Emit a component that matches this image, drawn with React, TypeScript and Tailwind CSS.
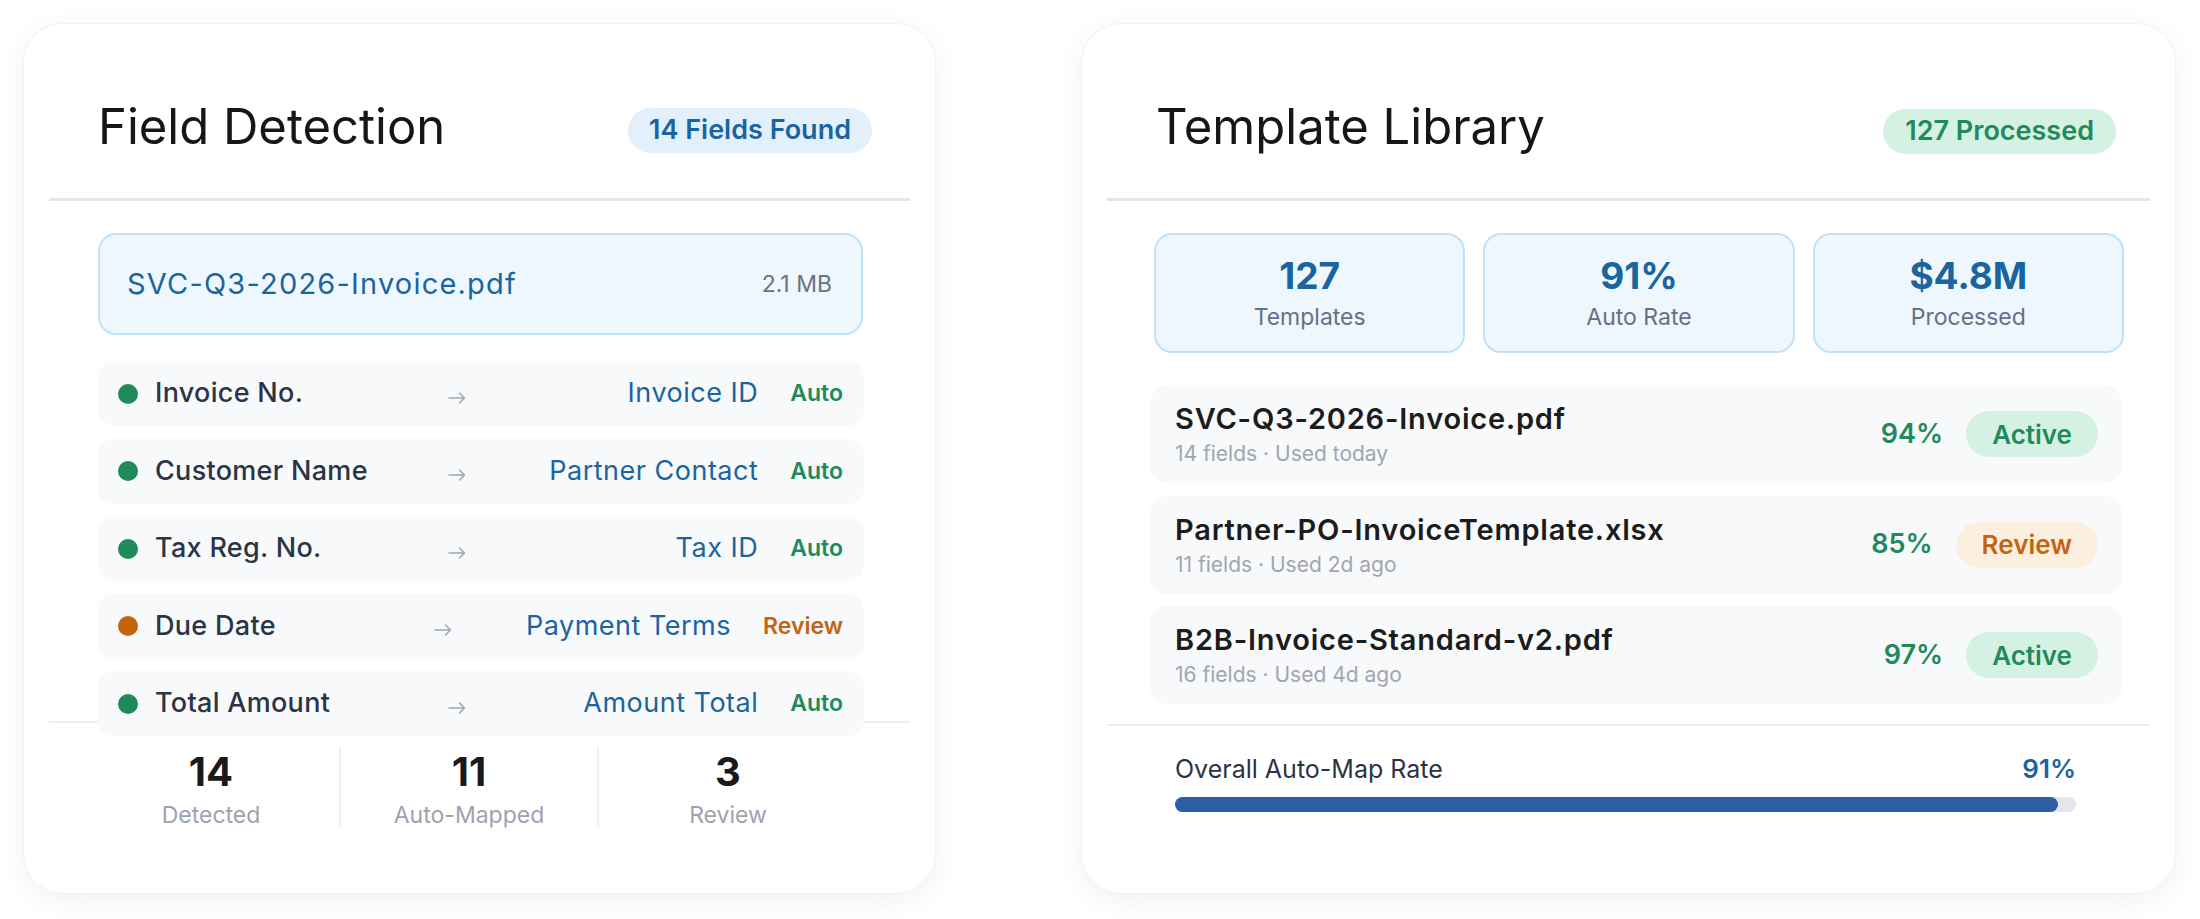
import React from 'react';

type Mapping = {
  label: string;
  target: string;
  status: 'Auto' | 'Review';
};

const mappings: Mapping[] = [
  { label: 'Invoice No.', target: 'Invoice ID', status: 'Auto' },
  { label: 'Customer Name', target: 'Partner Contact', status: 'Auto' },
  { label: 'Tax Reg. No.', target: 'Tax ID', status: 'Auto' },
  { label: 'Due Date', target: 'Payment Terms', status: 'Review' },
  { label: 'Total Amount', target: 'Amount Total', status: 'Auto' },
];

const templates = [
  { name: 'SVC-Q3-2026-Invoice.pdf', meta: '14 fields · Used today', rate: '94%', state: 'Active' },
  { name: 'Partner-PO-InvoiceTemplate.xlsx', meta: '11 fields · Used 2d ago', rate: '85%', state: 'Review' },
  { name: 'B2B-Invoice-Standard-v2.pdf', meta: '16 fields · Used 4d ago', rate: '97%', state: 'Active' },
];

function Arrow() {
  return (
    <svg width="18" height="14" viewBox="0 0 18 14" fill="none" className="shrink-0 translate-y-[4px]">
      <path d="M1 7h15.5M11.5 2l5 5-5 5" stroke="#a0a6b2" strokeWidth="1.5" strokeLinecap="round" strokeLinejoin="round" />
    </svg>
  );
}

function FieldDetection() {
  return (
    <div className="w-[913px] h-[871px] shrink-0 rounded-[40px] bg-white border border-[#f1f2f3] shadow-[0_6px_28px_rgba(0,0,0,0.06)]">
      <div className="flex justify-between items-start h-[174px] pl-[74px] pr-[63px]">
        <h2 className="mt-[78px] text-[49px] leading-none font-normal text-[#161616]">Field Detection</h2>
        <span className="mt-[84px] h-[45px] px-[21px] flex items-center rounded-full bg-[#e2f0fc] text-[27px] font-semibold text-[#1a64a0]">
          14 Fields Found
        </span>
      </div>
      <div className="mx-[25px] h-[3px] bg-[#e4e5e6]" />

      <div className="ml-[74px] mr-[72px] mt-[32px] h-[102px] rounded-[18px] border-2 border-[#c0e2f8] bg-[#eef7fe] flex items-center justify-between pl-[27px] pr-[29px]">
        <span className="text-[29px] tracking-[1.2px] text-[#1a64a0]">SVC-Q3-2026-Invoice.pdf</span>
        <span className="text-[23px] text-[#6b7280]">2.1 MB</span>
      </div>

      <div className="ml-[74px] mr-[71px] mt-[26px] h-[360px] flex flex-col gap-[12.5px]">
        {mappings.map((m) => (
          <div key={m.label} className="h-[65px] shrink-0 flex items-center rounded-[16px] bg-[#f7f9fb] pl-[20px] pr-[21px]">
            <span className={`w-[20px] h-[20px] rounded-full shrink-0 ${m.status === 'Auto' ? 'bg-[#1f8a5b]' : 'bg-[#c4640f]'}`} />
            <span className="ml-[17px] flex-1 min-w-0 text-[27px] font-medium tracking-[0.3px] text-[#2b3445] whitespace-nowrap">{m.label}</span>
            <Arrow />
            <span className="flex-1 min-w-0 text-right text-[27px] tracking-[0.5px] text-[#1a64a0] whitespace-nowrap">{m.target}</span>
            <span className={`ml-[32px] text-[23px] font-semibold ${m.status === 'Auto' ? 'text-[#1f8a5b]' : 'text-[#c4640f]'}`}>
              {m.status}
            </span>
          </div>
        ))}
      </div>

      <div className="mx-[25px] h-[2px] bg-[#eceef0]" />
      <div className="ml-[59px] w-[774px] mt-[25px] h-[79px] grid grid-cols-3">
        {[
          ['14', 'Detected'],
          ['11', 'Auto-Mapped'],
          ['3', 'Review'],
        ].map(([n, l], i) => (
          <div key={l} className={`flex flex-col items-center pt-[4px] ${i < 2 ? 'border-r-2 border-[#eef0f2]' : ''}`}>
            <span className="text-[40px] leading-none font-bold text-[#1a1a1a]">{n}</span>
            <span className="mt-[12px] text-[23px] leading-none text-[#9ca3af]">{l}</span>
          </div>
        ))}
      </div>
    </div>
  );
}

function TemplateLibrary() {
  return (
    <div className="w-[1095px] h-[871px] shrink-0 rounded-[40px] bg-white border border-[#f1f2f3] shadow-[0_6px_28px_rgba(0,0,0,0.06)]">
      <div className="flex justify-between items-start h-[174px] pl-[74px] pr-[59px]">
        <h2 className="mt-[78px] text-[49px] leading-none font-normal text-[#161616]">Template Library</h2>
        <span className="mt-[85px] h-[45px] px-[22px] flex items-center rounded-full bg-[#d5f1e3] text-[27px] font-semibold text-[#1f8a5b]">
          127 Processed
        </span>
      </div>
      <div className="mx-[25px] h-[3px] bg-[#e4e5e6]" />

      <div className="ml-[72px] mr-[51px] mt-[32px] grid grid-cols-3 gap-[18px]">
        {[
          ['127', 'Templates'],
          ['91%', 'Auto Rate'],
          ['$4.8M', 'Processed'],
        ].map(([n, l]) => (
          <div key={l} className="h-[120px] rounded-[18px] border-2 border-[#c0e2f8] bg-[#eef7fe] flex flex-col items-center justify-center gap-[12px]">
            <span className="text-[37px] leading-none font-bold text-[#1a64a0]">{n}</span>
            <span className="text-[23px] leading-none text-[#667085]">{l}</span>
          </div>
        ))}
      </div>

      <div className="ml-[68px] mr-[53px] mt-[32px] flex flex-col gap-[12.5px]">
        {templates.map((t) => (
          <div key={t.name} className="h-[98px] flex items-center rounded-[18px] bg-[#f7f9fb] pl-[25px] pr-[24px]">
            <div className="flex-1 min-w-0 flex flex-col gap-[10px]">
              <span className="text-[29px] leading-none font-semibold tracking-[0.8px] text-[#1c1c1c]">{t.name}</span>
              <span className="text-[21px] leading-none text-[#a0a6b1]">{t.meta}</span>
            </div>
            <span className="text-[27px] font-semibold text-[#1f8a5b]">{t.rate}</span>
            <span
              className={`ml-[23px] h-[46px] px-[26px] flex items-center rounded-full text-[26px] font-semibold ${
                t.state === 'Active' ? 'bg-[#d5f1e3] text-[#1f8a5b]' : 'bg-[#fdefe0] text-[#c4640f]'
              }`}
            >
              {t.state}
            </span>
          </div>
        ))}
      </div>

      <div className="mx-[25px] mt-[20px] h-[2px] bg-[#eceef0]" />
      <div className="ml-[93px] mr-[99px] mt-[30px]">
        <div className="flex items-center justify-between">
          <span className="text-[25px] leading-none text-[#2b3445]">Overall Auto-Map Rate</span>
          <span className="text-[26px] leading-none font-semibold text-[#1a64a0]">91%</span>
        </div>
        <div className="mt-[15px] h-[15px] rounded-full bg-[#e4e6eb]">
          <div className="h-full w-[98%] rounded-full bg-[#2b5ea3]" />
        </div>
      </div>
    </div>
  );
}

export default function App() {
  return (
    <div className="min-h-screen w-full bg-white font-['Inter','Noto_Sans',sans-serif] flex gap-[145px] pl-[23px] pt-[23px]">
      <FieldDetection />
      <TemplateLibrary />
    </div>
  );
}
